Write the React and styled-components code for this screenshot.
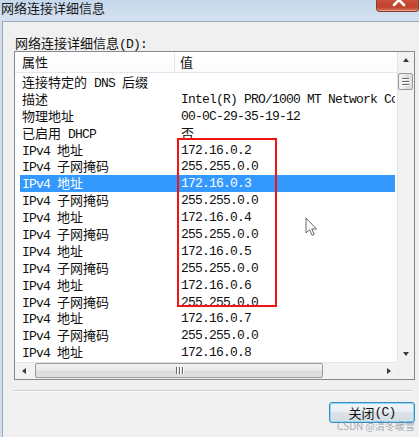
import React from 'react';
import styled, { createGlobalStyle } from 'styled-components';

const Global = createGlobalStyle`
  html, body { margin: 0; padding: 0; }
  body {
    width: 419px; height: 437px; overflow: hidden; background: #f0f0f0;
    font-family: "Liberation Mono", "Noto Sans CJK SC", monospace;
    color: #111;
  }
  * { box-sizing: border-box; }
`;

const Window = styled.div`
  width: 419px; height: 437px; display: flex; flex-direction: column;
  background: #d2deeb; position: relative; overflow: hidden;
`;

const TitleBar = styled.div`
  height: 21px; flex: none; display: flex; align-items: flex-start; justify-content: space-between;
  background: linear-gradient(#c6d8ec, #d4e2f0);
`;

const Title = styled.div`
  font-family: "Noto Sans CJK SC", sans-serif; font-size: 13px; line-height: 16px;
  color: #1a1a1a; padding-left: 1px;
`;

const CloseBtn = styled.div`
  width: 43px; height: 12px; border: 1px solid #8c3a2c; border-top: none;
  border-radius: 0 0 4px 4px; overflow: hidden;
  background: linear-gradient(#c9503b, #c0402b 60%, #d06a53);
  box-shadow: inset 0 -1px 1px rgba(255, 200, 180, 0.6);
  svg { display: block; }
`;

const Body = styled.div`
  flex: 1; margin-left: 2px; border-left: 1px solid #9ba9ba; border-top: 1px solid #9ba9ba;
  background: #f0f0f0; padding: 12px 4px 0 11px; display: flex; flex-direction: column;
`;

const Cjk = styled.span`
  font-family: "Noto Sans CJK SC", sans-serif; font-size: 13px; letter-spacing: 0;
`;

const Lat = styled.span`
  font-family: "Liberation Mono", monospace; font-size: 13px; letter-spacing: -0.8px;
`;

const CJK_RE = /([\u2E80-\u9FFF\uF900-\uFAFF\uFF00-\uFFEF]+)/;
function Txt({ text }) {
  return String(text).split(CJK_RE).map((p, i) =>
    p === '' ? null : CJK_RE.test(p) ? <Cjk key={i}>{p}</Cjk> : <Lat key={i}>{p}</Lat>
  );
}

const Label = styled.div`
  height: 17px; line-height: 17px; padding-left: 1px; white-space: nowrap;
`;

const ListBox = styled.div`
  height: 329px; border: 1px solid #828790; background: #fff; display: grid;
  grid-template-columns: minmax(0, 1fr) 17px; grid-template-rows: minmax(0, 1fr) 17px;
`;

const Content = styled.div`
  position: relative; overflow: hidden; display: flex; flex-direction: column; min-width: 0;
`;

const Header = styled.div`
  height: 21px; flex: none; display: flex; border-bottom: 1px solid #e3e5e8;
  background: linear-gradient(#ffffff, #fbfbfc);
`;

const HeadCell = styled.div`
  width: ${p => p.$w ? p.$w + 'px' : 'auto'}; flex: ${p => p.$w ? 'none' : '1'};
  padding-left: ${p => p.$pl}px; line-height: 20px; white-space: nowrap;
  border-right: ${p => p.$w ? '1px solid #e3e5e8' : 'none'};
`;

const Rows = styled.div`
  padding: 1px 2px 0 5px; display: flex; flex-direction: column;
`;

const Row = styled.div`
  height: 16.9px; line-height: 16.9px; display: flex; overflow: hidden; white-space: nowrap;
  background: ${p => p.$sel ? '#3399ff' : 'transparent'};
  color: ${p => p.$sel ? '#fff' : '#111'};
`;

const Cell = styled.div`
  width: ${p => p.$w ? p.$w + 'px' : 'auto'}; flex: ${p => p.$w ? 'none' : '1'};
  padding-left: ${p => p.$pl}px; overflow: hidden; min-width: 0;
`;

const Mark = styled.div`
  position: absolute; left: 162px; top: 86px; width: 100px; height: 169px;
  border: 2px solid #f01414;
`;

const Cursor = styled.svg`
  position: absolute; left: 290px; top: 165px;
`;

const VScroll = styled.div`
  display: flex; flex-direction: column; background: #f2f2f2;
  box-shadow: inset 1px 0 0 #e4e4e4;
`;

const HScroll = styled.div`
  display: flex; background: #f2f2f2; box-shadow: inset 0 1px 0 #e4e4e4;
`;

const Corner = styled.div`
  background: #f0f0f0;
`;

const ArrowBtn = styled.div`
  width: 17px; height: 17px; flex: none; display: flex; align-items: center; justify-content: center;
`;

const Tri = styled.div`
  width: 0; height: 0; border: 3.5px solid transparent;
  ${p => p.$dir === 'up' && 'border-bottom: 4px solid #3a3a3a; border-top-width: 0; margin-top: -2px;'}
  ${p => p.$dir === 'down' && 'border-top: 4px solid #3a3a3a; border-bottom-width: 0;'}
  ${p => p.$dir === 'left' && 'border-right: 4px solid #3a3a3a; border-left-width: 0;'}
  ${p => p.$dir === 'right' && 'border-left: 4px solid #3a3a3a; border-right-width: 0;'}
`;

const Spacer = styled.div`flex: 1;`;

const VThumb = styled.div`
  margin: 4px 1px 0 1px; height: 17px; flex: none; border: 1px solid #9a9a9a; border-radius: 2px;
  background: linear-gradient(90deg, #f4f4f4, #e8e8e8 50%, #d9d9d9 51%, #e2e2e2);
  display: flex; flex-direction: column; align-items: center; justify-content: center; gap: 2px;
`;

const HThumb = styled.div`
  margin: 1px 0 1px 3px; width: 288px; flex: none; border: 1px solid #9a9a9a; border-radius: 2px;
  background: linear-gradient(#f4f4f4, #e8e8e8 50%, #d9d9d9 51%, #e2e2e2);
  display: flex; align-items: center; justify-content: center; gap: 2px;
`;

const Grip = styled.div`
  ${p => p.$v ? 'width: 7px; height: 1px;' : 'width: 1px; height: 7px;'}
  background: #6b6b6b; box-shadow: ${p => p.$v ? '0 1px 0 #fff' : '1px 0 0 #fff'};
`;

const Separator = styled.div`
  margin-top: 10px; margin-right: 3px; height: 2px; border-top: 1px solid #cdd1d5; border-bottom: 1px solid #fcfcfc;
`;

const ButtonRow = styled.div`
  margin-top: 10px; display: flex; justify-content: flex-end;
`;

const Button = styled.div`
  width: 86px; height: 21px; border: 1px solid #3d8bc2; border-radius: 3px;
  background: linear-gradient(#f3f7fa, #eaeef2 48%, #dde3e8 50%, #d3dbe2);
  box-shadow: inset 0 0 0 1px #8ed8f6, inset 0 0 2px 1px #c5ecfb;
  display: flex; align-items: center; justify-content: center; line-height: 19px; color: #111;
  white-space: nowrap;
`;

const Watermark = styled.div`
  position: absolute; right: 4px; bottom: 5px; font-family: "Noto Sans CJK SC", sans-serif;
  font-size: 10px; line-height: 12px; color: rgba(130, 140, 152, 0.7); white-space: nowrap;
`;

const rows = [
  ['连接特定的 DNS 后缀', ''],
  ['描述', 'Intel(R) PRO/1000 MT Network Connection'],
  ['物理地址', '00-0C-29-35-19-12'],
  ['已启用 DHCP', '否'],
];
for (let i = 2; i <= 8; i++) {
  rows.push(['IPv4 地址', `172.16.0.${i}`]);
  if (i < 8) rows.push(['IPv4 子网掩码', '255.255.0.0']);
}

export default function App() {
  return (
    <Window>
      <Global />
      <TitleBar>
        <Title>网络连接详细信息</Title>
        <CloseBtn>
          <svg width="43" height="12" viewBox="0 0 43 12">
            <path d="M17 -5 L27 5 M27 -5 L17 5" stroke="#fff" strokeWidth="2.6" strokeLinecap="round" />
          </svg>
        </CloseBtn>
      </TitleBar>
      <Body>
        <Label><Txt text="网络连接详细信息(D):" /></Label>
        <ListBox>
          <Content>
            <Header>
              <HeadCell $w={160} $pl={7}><Txt text="属性" /></HeadCell>
              <HeadCell $pl={5}><Txt text="值" /></HeadCell>
            </Header>
            <Rows>
              {rows.map(([k, v], i) => (
                <Row key={i} $sel={i === 6}>
                  <Cell $w={161} $pl={2}><Txt text={k} /></Cell>
                  <Cell $pl={0}><Txt text={v} /></Cell>
                </Row>
              ))}
            </Rows>
            <Mark />
            <Cursor width="13" height="20" viewBox="0 0 13 20">
              <path d="M1 1 V16 L4.5 12.8 L7 18.3 L9.2 17.3 L6.8 12 H11.5 Z" fill="#fafafa" stroke="#666" strokeWidth="1" strokeLinejoin="round" />
            </Cursor>
          </Content>
          <VScroll>
            <ArrowBtn><Tri $dir="up" /></ArrowBtn>
            <VThumb><Grip $v /><Grip $v /><Grip $v /></VThumb>
            <Spacer />
            <ArrowBtn><Tri $dir="down" /></ArrowBtn>
          </VScroll>
          <HScroll>
            <ArrowBtn><Tri $dir="left" /></ArrowBtn>
            <HThumb><Grip /><Grip /><Grip /></HThumb>
            <Spacer />
            <ArrowBtn><Tri $dir="right" /></ArrowBtn>
          </HScroll>
          <Corner />
        </ListBox>
        <Separator />
        <ButtonRow>
          <Button><Txt text="关闭(C)" /></Button>
        </ButtonRow>
      </Body>
      <Watermark>CSDN @清冬暖雪</Watermark>
    </Window>
  );
}
